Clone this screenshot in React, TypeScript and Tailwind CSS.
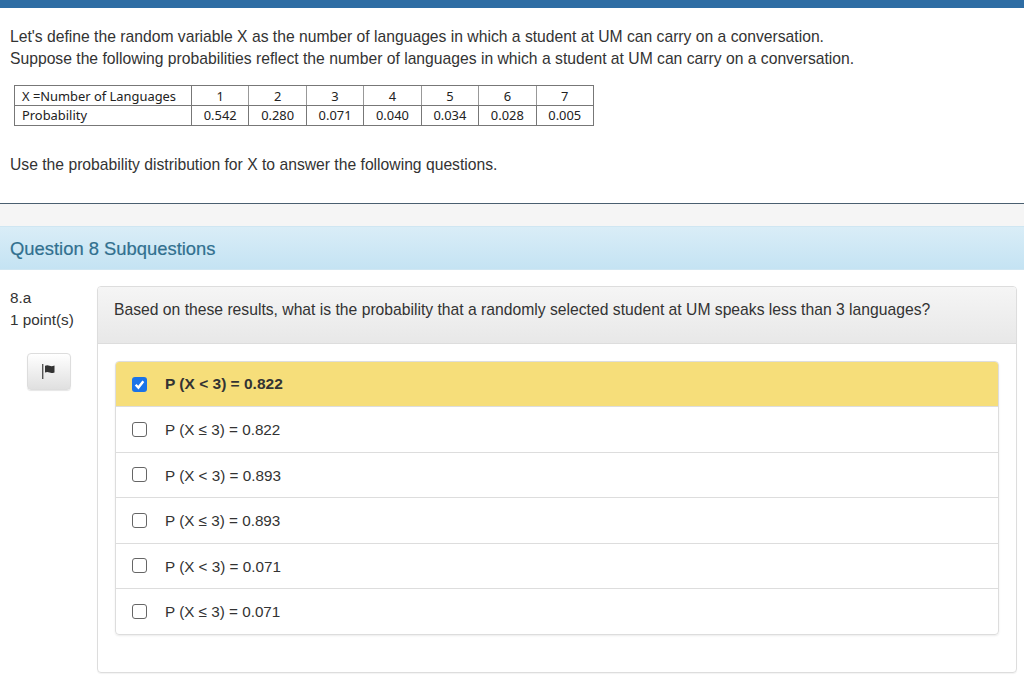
const probs = ["0.542", "0.280", "0.071", "0.040", "0.034", "0.028", "0.005"];
const options = [
  "P (X < 3) = 0.822",
  "P (X ≤ 3) = 0.822",
  "P (X < 3) = 0.893",
  "P (X ≤ 3) = 0.893",
  "P (X < 3) = 0.071",
  "P (X ≤ 3) = 0.071",
];

function Flag() {
  return (
    <svg width="14" height="15" viewBox="0 0 14 15" fill="#333">
      <rect x="0" y="0" width="1.4" height="15" fill="#555" />
      <path d="M3 1.800c1.700-.9 3.100-.7 4.500 0s3 .6 5-.2v6.800c-2 .8-3.600.9-5 .2s-2.800-.9-4.500 0z" />
    </svg>
  );
}

export default function App() {
  return (
    <div className="w-[1024px] h-[689px] overflow-hidden bg-white text-[#333] text-[15.7px] leading-[22px] font-['Liberation_Sans',Arial,sans-serif]">
      <div className="h-2 bg-[#2e6da4]" />
      <div className="px-2.5 pt-[18px] h-[196px] border-b border-[#4a5f70]">
        <p className="whitespace-nowrap">Let's define the random variable X as the number of languages in which a student at UM can carry on a conversation.</p>
        <p className="whitespace-nowrap">Suppose the following probabilities reflect the number of languages in which a student at UM can carry on a conversation.</p>
        <div className="mt-[15px] ml-1 w-[580px] border border-[#777] font-['Noto_Sans',sans-serif] text-[12.9px] leading-[19px] text-[#222]">
          <div className="flex h-[20px] pt-px border-b border-[#777]">
            <div className="w-[177px] pl-[7px] -mt-px pt-px border-r border-[#777] whitespace-nowrap">X =Number of Languages</div>
            {[1, 2, 3, 4, 5, 6, 7].map((n) => (
              <div key={n} className="flex-1 -mt-px pt-px text-center border-r border-[#999] last:border-r-0">{n}</div>
            ))}
          </div>
          <div className="flex h-[19px]">
            <div className="w-[177px] pl-[7px] border-r border-[#777]">Probability</div>
            {probs.map((p) => (
              <div key={p} className="flex-1 text-center border-r border-[#777] last:border-r-0">{p}</div>
            ))}
          </div>
        </div>
        <p className="mt-[28px]">Use the probability distribution for X to answer the following questions.</p>
      </div>
      <div className="h-[22px] bg-[#f5f5f5]" />
      <div className="h-[44px] flex items-center px-2.5 pt-0.5 bg-gradient-to-b from-[#d9edf7] to-[#c4e3f3] border-y border-[#cfe6f2] text-[#31708f] text-[18.4px] [-webkit-text-stroke:0.2px_#31708f]">
        Question 8 Subquestions
      </div>
      <div className="flex pt-4">
        <div className="w-[97px] shrink-0 pl-2.5 pt-px text-[15.3px] leading-[22px]">
          <div>8.a</div>
          <div>1 point(s)</div>
          <button className="mt-[22px] ml-[17px] w-[44px] h-[37px] flex items-center justify-center rounded-[4px] border border-[#ddd] bg-gradient-to-b from-white to-[#e0e0e0] shadow-[0_1px_1px_rgba(0,0,0,0.1)]">
            <Flag />
          </button>
        </div>
        <div className="w-[920px] h-[387px] rounded-[4px] border border-[#ddd] shadow-[0_1px_1px_rgba(0,0,0,0.05)] overflow-hidden">
          <div className="h-[57px] pl-[16px] pt-[12px] border-b border-[#ddd] bg-gradient-to-b from-[#f5f5f5] to-[#e8e8e8] whitespace-nowrap">
            Based on these results, what is the probability that a randomly selected student at UM speaks less than 3 languages?
          </div>
          <div className="mx-[17px] mt-[17px] rounded-[4px] border border-[#ddd] shadow-[0_1px_2px_rgba(0,0,0,0.08)] overflow-hidden text-[15.25px]">
            {options.map((o, i) => (
              <div
                key={i}
                className={
                  i === 0
                    ? "h-[44px] flex items-center pl-[16px] bg-[#f6de7a] font-bold text-[15.5px]"
                    : "h-[45.500px] flex items-center pl-[16px] border-t border-[#ddd]"
                }
              >
                {i === 0 ? (
                  <span className="w-[15px] h-[15px] mr-[18px] rounded-[3px] bg-[#1a73e8] flex items-center justify-center">
                    <svg width="11" height="11" viewBox="0 0 10 10" fill="none" stroke="#fff" strokeWidth="2.200">
                      <path d="M1.500 5.200 4 7.800 8.500 2" />
                    </svg>
                  </span>
                ) : (
                  <span className="w-[15px] h-[15px] mr-[18px] rounded-[3px] border border-[#666] bg-white" />
                )}
                <span className={i === 0 ? "" : "translate-y-px"}>{o}</span>
              </div>
            ))}
          </div>
        </div>
      </div>
    </div>
  );
}
